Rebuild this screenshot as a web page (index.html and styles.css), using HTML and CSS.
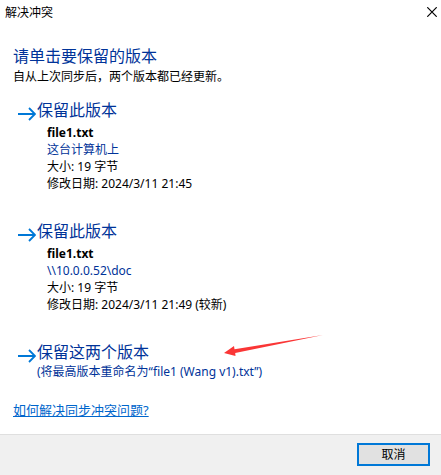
FILE: index.html
```html
<!DOCTYPE html>
<html lang="zh-CN">
<head>
<meta charset="utf-8">
<title>解决冲突</title>
<link rel="stylesheet" href="styles.css">
</head>
<body>
<div class="dialog" role="dialog" aria-labelledby="caption">
  <header class="titlebar">
    <span id="caption">解决冲突</span>
    <button class="close" type="button" aria-label="关闭">
      <svg width="10" height="10" viewBox="0 0 10 10"><path d="M0.3 0.3L9.7 9.7M9.7 0.3L0.3 9.7" stroke="#000" stroke-width="1.2"/></svg>
    </button>
  </header>
  <main class="content">
    <h1 class="heading">请单击要保留的版本</h1>
    <p class="intro">自从上次同步后，两个版本都已经更新。</p>
    <div class="choices">
      <button class="choice" type="button">
        <svg class="arrow" width="18" height="14" viewBox="0 0 18 14"><path d="M0 7H17M11 1L17 7L11 13"/></svg>
        <span class="body">
          <span class="title">保留此版本</span>
          <span class="details">
            <strong>file1.txt</strong>
            <span class="place">这台计算机上</span>
            <span>大小: 19 字节</span>
            <span>修改日期: 2024/3/11 21:45</span>
          </span>
        </span>
      </button>
      <button class="choice" type="button">
        <svg class="arrow" width="18" height="14" viewBox="0 0 18 14"><path d="M0 7H17M11 1L17 7L11 13"/></svg>
        <span class="body">
          <span class="title">保留此版本</span>
          <span class="details">
            <strong>file1.txt</strong>
            <span class="place">\\10.0.0.52\doc</span>
            <span>大小: 19 字节</span>
            <span>修改日期: 2024/3/11 21:49 (较新)</span>
          </span>
        </span>
      </button>
      <button class="choice" type="button">
        <svg class="arrow" width="18" height="14" viewBox="0 0 18 14"><path d="M0 7H17M11 1L17 7L11 13"/></svg>
        <span class="body">
          <span class="title">保留这两个版本</span>
          <span class="place">(将最高版本重命名为“file1 (Wang v1).txt”)</span>
        </span>
        <svg class="pointer" width="100" height="24" viewBox="0 0 100 24"><path d="M0 19L10 12L10.500 15.200L99 1L11.200 19L11.500 22Z" fill="#fa3636"/></svg>
      </button>
    </div>
    <a class="help" href="#">如何解决同步冲突问题?</a>
  </main>
  <footer class="footer">
    <button class="cancel" type="button">取消</button>
  </footer>
</div>
</body>
</html>
```
FILE: styles.css
```css
* {
  box-sizing: border-box;
}

body {
  margin: 0;
  background: #fff;
  color: #000;
  font: 12px/17px "Noto Sans", "Noto Sans CJK SC", sans-serif;
}

button {
  padding: 0;
  border: 0;
  background: none;
  color: inherit;
  font: inherit;
}

.dialog {
  display: flex;
  flex-direction: column;
  min-height: 100vh;
}

.titlebar {
  display: flex;
  align-items: center;
  justify-content: space-between;
  height: 24px;
  padding: 0 4px 0 5px;
}

.close {
  display: flex;
}

.content {
  flex: 1;
  padding: 20px 13px 0;
}

.heading {
  margin: 0;
  color: #003399;
  font-size: 16px;
  font-weight: 400;
  line-height: 24px;
}

.intro {
  margin: 0;
}

.choices {
  display: flex;
  flex-direction: column;
  gap: 28px;
  margin-top: 14px;
}

.choice {
  position: relative;
  display: flex;
  width: 100%;
  padding-left: 5px;
  text-align: left;
}

.arrow {
  flex: none;
  margin: 8px 1px 0 0;
  fill: none;
  stroke: #0078d7;
  stroke-width: 1.8;
}

.body,
.details {
  display: flex;
  flex-direction: column;
}

.details {
  padding: 3px 0 0 10px;
}

.title {
  color: #003399;
  font-size: 16px;
  line-height: 22px;
}

.place {
  color: #003399;
}

.pointer {
  position: absolute;
  top: -7px;
  left: 211px;
}

.help {
  display: inline-block;
  margin-top: 22px;
  color: #0066cc;
  font-size: 13px;
}

.footer {
  display: flex;
  justify-content: flex-end;
  padding: 8px 11px 9px;
  border-top: 1px solid #dfdfdf;
  background: #f0f0f0;
}

.cancel {
  width: 73px;
  height: 23px;
  border: 2px solid #0078d7;
  background: #e1e1e1;
}
```
